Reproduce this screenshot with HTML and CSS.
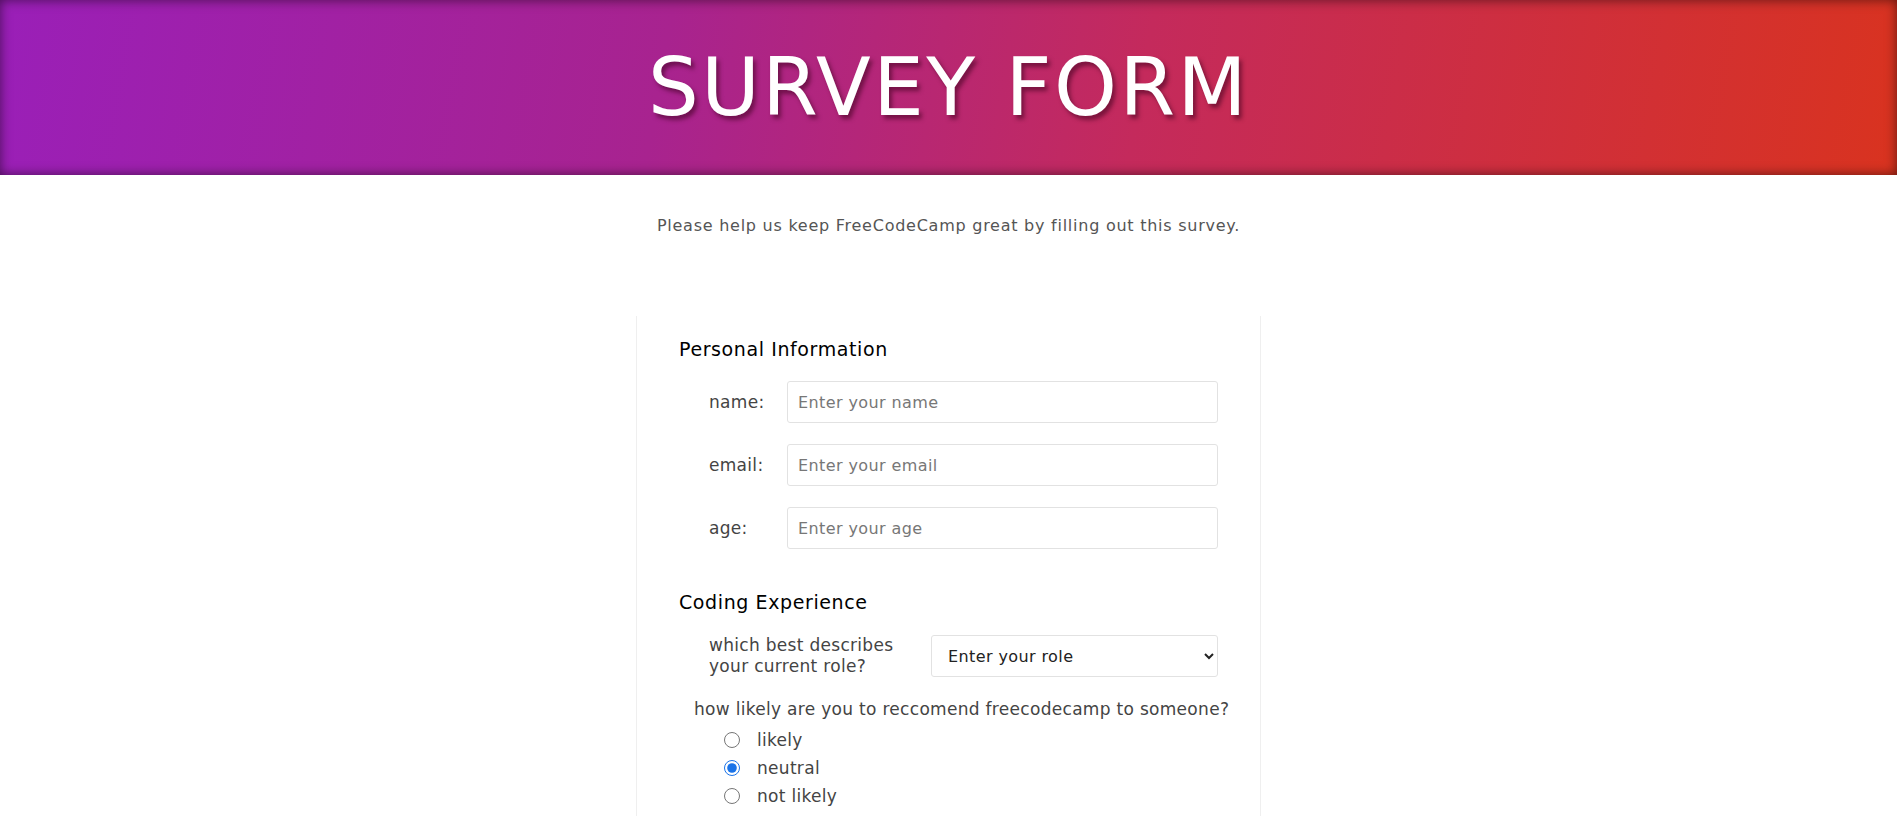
FILE: index.html
```html
<!DOCTYPE html>
<html lang="en">
<head>
<meta charset="utf-8">
<title>Survey Form</title>
<link rel="stylesheet" href="styles.css">
</head>
<body>
<header class="hero">
  <h1 class="hero-title" id="title">SURVEY FORM</h1>
</header>
<p class="intro" id="description">Please help us keep FreeCodeCamp great by filling out this survey.</p>
<form class="survey" id="survey-form">
  <h3 class="section-title">Personal Information</h3>
  <div class="field-row">
    <label class="field-label" for="name" id="name-label">name:</label>
    <input class="field-input" type="text" id="name" placeholder="Enter your name">
  </div>
  <div class="field-row">
    <label class="field-label" for="email" id="email-label">email:</label>
    <input class="field-input" type="email" id="email" placeholder="Enter your email">
  </div>
  <div class="field-row">
    <label class="field-label" for="number" id="number-label">age:</label>
    <input class="field-input" type="number" id="number" placeholder="Enter your age">
  </div>

  <h3 class="section-title section-gap">Coding Experience</h3>
  <div class="field-row role-row">
    <label class="field-label role-label" for="dropdown">which best describes your current role?</label>
    <select class="field-select" id="dropdown">
      <option>Enter your role</option>
      <option>Student</option>
      <option>Full time job</option>
      <option>Prefer not to say</option>
    </select>
  </div>
  <p class="question">how likely are you to reccomend freecodecamp to someone?</p>
  <div class="radio-list">
    <label class="radio-item"><input class="radio" type="radio" name="rec" value="likely"><span>likely</span></label>
    <label class="radio-item"><input class="radio" type="radio" name="rec" value="neutral" checked><span>neutral</span></label>
    <label class="radio-item"><input class="radio" type="radio" name="rec" value="not-likely"><span>not likely</span></label>
  </div>
</form>
</body>
</html>
```
FILE: styles.css
```css
html, body {
  margin: 0;
  padding: 0;
}
body {
  font-family: "DejaVu Sans", "Noto Sans", sans-serif;
  color: #444;
  background: #fff;
}
.hero {
  height: 175px;
  display: flex;
  align-items: center;
  justify-content: center;
  background: linear-gradient(100deg, #9a1fb8 0%, #a8238f 35%, #c42a5c 60%, #d9331f 100%);
  box-shadow: inset 0 0 12px rgba(0, 0, 0, 0.55);
}
.hero-title {
  margin: 0;
  font-size: 80px;
  font-weight: 400;
  color: #fff;
  letter-spacing: 2.5px;
  text-shadow: 3px 4px 4px rgba(60, 0, 30, 0.55);
  line-height: 1;
}
.intro {
  margin: 39px 0 0;
  text-align: center;
  font-size: 16px;
  letter-spacing: 0.75px;
  line-height: 24px;
  color: #555;
}
.survey {
  box-sizing: border-box;
  width: 625px;
  margin: 78px auto 0;
  padding: 21px 42px 40px;
  border-left: 1px solid #efefef;
  border-right: 1px solid #efefef;
  min-height: 600px;
}
.section-title {
  margin: 0;
  font-size: 19px;
  letter-spacing: 0.6px;
  font-weight: 400;
  line-height: 24px;
  color: #000;
}
.section-gap {
  margin-top: 41px;
}
.field-row {
  display: flex;
  align-items: center;
  margin: 20px 0 0 30px;
}
.field-row + .field-row {
  margin-top: 21px;
}
.field-label {
  width: 78px;
  flex: none;
  font-size: 17px;
  letter-spacing: 0.3px;
  color: #444;
}
.field-input,
.field-select {
  box-sizing: border-box;
  height: 42px;
  flex: 1;
  border: 1px solid #e2e2e2;
  border-radius: 3px;
  font-family: inherit;
  font-size: 16px;
  letter-spacing: 0.4px;
  color: #222;
  background: #fff;
  padding: 0 10px;
}
.field-input::placeholder {
  color: #777;
}
.field-input::-webkit-outer-spin-button,
.field-input::-webkit-inner-spin-button {
  -webkit-appearance: none;
  margin: 0;
}
.role-row {
  margin-top: 21px;
}
.role-label {
  width: 222px;
  line-height: 21px;
}
.field-select {
  padding: 0 12px;
}
.question {
  margin: 20px 0 0 15px;
  font-size: 17px;
  letter-spacing: 0.3px;
  line-height: 24px;
  white-space: nowrap;
  color: #444;
}
.radio-list {
  margin: 5px 0 0 45px;
  display: flex;
  flex-direction: column;
}
.radio-item {
  display: flex;
  align-items: center;
  height: 28px;
  font-size: 17px;
  letter-spacing: 0.3px;
  color: #444;
}
.radio {
  width: 16px;
  height: 16px;
  margin: 0 17px 0 0;
  accent-color: #1a73e8;
}
```
